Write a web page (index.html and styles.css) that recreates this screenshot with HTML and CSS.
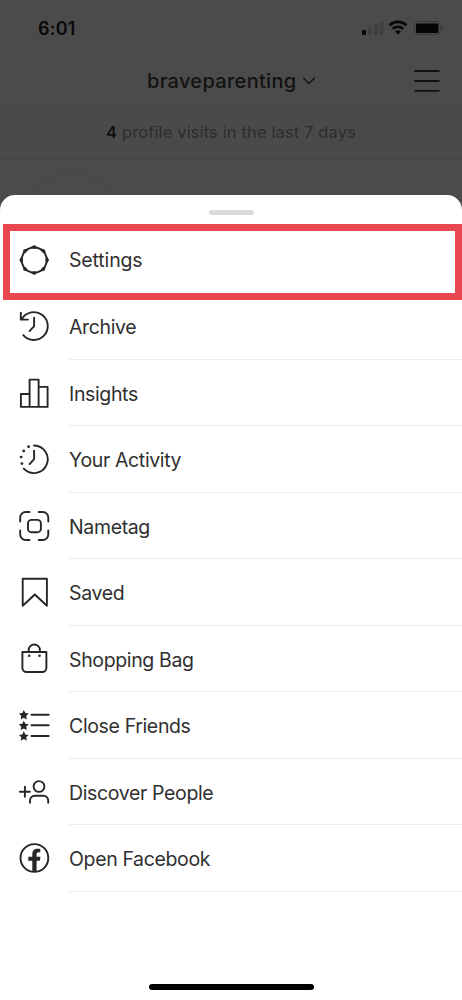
FILE: index.html
```
<!DOCTYPE html>
<html lang="en">
<head>
<meta charset="utf-8">
<title>Profile menu</title>
<link rel="stylesheet" href="styles.css">
</head>
<body>
<div class="screen">
  <div class="status">
    <span class="time">6:01</span>
    <svg class="indicators" width="84" height="18" viewBox="0 0 84 18">
      <g fill="#3f3f3f"><rect x="7" y="9" width="4" height="8" rx="1"/><rect x="13" y="6" width="4" height="11" rx="1"/><rect x="18.500" y="3" width="4" height="14" rx="1"/></g>
      <rect x="1" y="12" width="4" height="5" rx="1" fill="#080808"/>
      <g fill="none" stroke="#080808" stroke-width="2.600"><path d="M28.500 7.200a12.500 12.500 0 0 1 17 0"/><path d="M31.800 10.800a7.700 7.700 0 0 1 10.400 0"/></g>
      <path d="M34.200 13.500a4.400 4.400 0 0 1 5.600 0L37 16.800z" fill="#080808"/>
      <rect x="53.500" y="3.500" width="26" height="13" rx="3.500" fill="none" stroke="#393939"/>
      <rect x="55" y="5.500" width="22.500" height="9.500" rx="1.500" fill="#050505"/>
      <path d="M81 8v4q1.500-.5 1.500-2T81 8" fill="#393939"/>
    </svg>
  </div>
  <div class="header">
    <div class="account"><span class="username">braveparenting</span>
      <svg width="14" height="10" viewBox="0 0 14 10"><path d="M1.200 1.700 7 7.500l5.800-5.800" fill="none" stroke="#161616" stroke-width="1.500"/></svg>
    </div>
    <svg class="burger" width="26" height="24" viewBox="0 0 26 24"><path d="M.5 2h25M.5 12h25M.5 21.800h25" stroke="#111" stroke-width="1.800"/></svg>
  </div>
  <div class="visits"><p><b>4</b> profile visits in the last 7 days</p></div>
  <div class="profile"><div class="avatar"></div></div>
  <div class="sheet">
    <div class="handle"></div>
    <ul class="menu">
      <li class="item selected"><svg class="icon" viewBox="0 0 32 32"><circle cx="16.200" cy="16" r="12.500"/><g class="solid" transform="translate(16.200 16)"><path id="cog" d="M-3.600-12.700-.8-14.500q.8-.5 1.600 0l2.800 1.800L0-11z"/><use href="#cog" transform="rotate(45)"/><use href="#cog" transform="rotate(90)"/><use href="#cog" transform="rotate(135)"/><use href="#cog" transform="rotate(180)"/><use href="#cog" transform="rotate(225)"/><use href="#cog" transform="rotate(270)"/><use href="#cog" transform="rotate(315)"/></g></svg><span class="label">Settings</span></li>
      <li class="item"><svg class="icon" viewBox="0 0 32 32"><path d="M5.300 25.100A13.900 13.900 0 1 0 4 8.800M2.800 2.600v7h7.100M16.100 7.600v8.600l-4.500 4.900"/></svg><span class="label">Archive</span></li>
      <li class="item"><svg class="icon" viewBox="0 0 32 32"><path d="M2.900 17h8.700v12.900H2.900zM11.600 2.600h9v27.300h-9zM20.600 9.900h9v20h-9z"/></svg><span class="label">Insights</span></li>
      <li class="item"><svg class="icon" viewBox="0 0 32 32"><path d="M16 2.500a13.800 13.800 0 1 1-10.200 23.200M16.100 7.600v8.600l-4.500 4.900"/><g class="solid"><circle cx="10.600" cy="3.700" r="1.400"/><circle cx="5.700" cy="7.900" r="1.400"/><circle cx="3.100" cy="14.100" r="1.400"/><circle cx="3.900" cy="20.600" r="1.400"/></g></svg><span class="label">Your Activity</span></li>
      <li class="item"><svg class="icon" viewBox="0 0 32 32"><path d="M2.200 11.500V7.500a5.500 5.500 0 0 1 5.500-5.500h3.800M20.700 2h4.100a5.500 5.500 0 0 1 5.500 5.500v4M30.300 20.500v4a5.500 5.500 0 0 1-5.500 5.500h-4.100M11.500 30H7.700a5.500 5.500 0 0 1-5.500-5.500v-4"/><rect x="10" y="9.900" width="12.900" height="12.300" rx="3.500"/></svg><span class="label">Nametag</span></li>
      <li class="item"><svg class="icon" viewBox="0 0 32 32"><path d="M4.700 2.700h24.200v27L16.800 18.500 4.700 29.700z"/></svg><span class="label">Saved</span></li>
      <li class="item"><svg class="icon" viewBox="0 0 32 32"><path d="M4.400 9h24v15.800a4.200 4.200 0 0 1-4.200 4.200H8.600a4.200 4.200 0 0 1-4.200-4.200zM10.700 9V7.100a5.600 5.600 0 0 1 11.200 0V9"/><circle class="solid" cx="11.200" cy="12.800" r="1.300"/><circle class="solid" cx="21.500" cy="12.800" r="1.300"/></svg><span class="label">Shopping Bag</span></li>
      <li class="item"><svg class="icon" viewBox="0 0 32 32"><path d="M13.500 5.800h17.200M13.500 16.300h17.200M13.500 27h17.200"/><g class="solid"><path id="star" d="m5.800 1 1.500 3.100 3.400.5-2.500 2.400.6 3.400-3-1.600-3.100 1.600.6-3.400L.9 4.600l3.400-.5z"/><use href="#star" y="10.700"/><use href="#star" y="21.300"/></g></svg><span class="label">Close Friends</span></li>
      <li class="item"><svg class="icon" viewBox="0 0 32 32"><circle cx="21" cy="10.500" r="5.400"/><path d="M1.900 15.700h10M6.900 10.700v10M12 26.700v-2.100a4.800 4.800 0 0 1 4.800-4.800h8.600a4.800 4.800 0 0 1 4.800 4.800v2.100"/></svg><span class="label">Discover People</span></li>
      <li class="item"><svg class="icon" viewBox="0 0 32 32"><circle cx="16.400" cy="16" r="13.900"/><path class="solid" d="M14.300 30V18.800h-4v-4h4v-2.500c0-4 2.200-5.600 5.300-5.600 1.400 0 2.700.2 2.700.2v3.400h-1.700c-1.500 0-2 .9-2 2.100v2.400h3.900l-.7 4h-3.200V30z"/></svg><span class="label">Open Facebook</span></li>
    </ul>
    <div class="home"></div>
    <div class="highlight"></div>
  </div>
</div>
</body>
</html>
```
FILE: styles.css
```
* { box-sizing: border-box; }
body { margin: 0; font-family: Inter, "Liberation Sans", sans-serif; background: #4b4b4b; }
.screen { height: 1000px; display: flex; flex-direction: column; overflow: hidden; background: #4b4b4b; }
.status { height: 56px; display: flex; justify-content: space-between; padding: 18px 17px 0 38px; }
.time { font-size: 18px; line-height: 22px; font-weight: 600; color: #080808; letter-spacing: .2px; }
.indicators { display: block; }
.header { height: 53px; display: flex; justify-content: space-between; align-items: center; padding: 0 22px 3px 147px; border-bottom: 1px solid #484848; }
.account { display: flex; align-items: center; gap: 6px; }
.username { font-size: 20px; line-height: 28px; font-weight: 500; color: #121212; letter-spacing: .3px; padding-top: 1px; }
.burger { display: block; }
.visits { height: 50px; padding-bottom: 4px; border-bottom: 1px solid #424242; display: flex; justify-content: center; align-items: center; background: #4a4a4a; }
.visits p { margin: 0; font-size: 16.500px; line-height: 24px; letter-spacing: .13px; color: #2d2d2d; white-space: nowrap; }
.visits b { color: #101010; font-weight: 600; }
.profile { height: 35.500px; padding: 13px 0 0 22px; overflow: hidden; }
.avatar { width: 100px; height: 100px; border: 1px solid #464646; border-radius: 50%; }
.sheet { position: relative; flex: 1; background: #fff; border-radius: 15px 15px 0 0; display: flex; flex-direction: column; align-items: center; }
.handle { width: 45px; height: 5px; margin: 15px 0 12px; border-radius: 3px; background: #dbdbdb; }
.menu { list-style: none; width: 100%; margin: 0; padding: 0; }
.item { height: 66.500px; display: flex; align-items: center; padding-left: 18px; gap: 19px; }
.icon { width: 32px; height: 32px; flex: none; fill: none; stroke: #262626; stroke-width: 1.900; stroke-linecap: round; stroke-linejoin: round; }
.solid { fill: #262626; stroke: none; }
.label { flex: 1; height: 100%; line-height: 68px; font-size: 19.500px; letter-spacing: -.36px; color: #303030; border-bottom: 1px solid #ececec; }
.selected .label { letter-spacing: -.15px; line-height: 67px; border-bottom-color: transparent; }
.home { width: 165px; height: 6px; margin: auto 0 10px; border-radius: 3px; background: #000; }
.highlight { position: absolute; left: 3px; right: 0; top: 29px; height: 76px; border: 7px solid #e8484f; }
```
